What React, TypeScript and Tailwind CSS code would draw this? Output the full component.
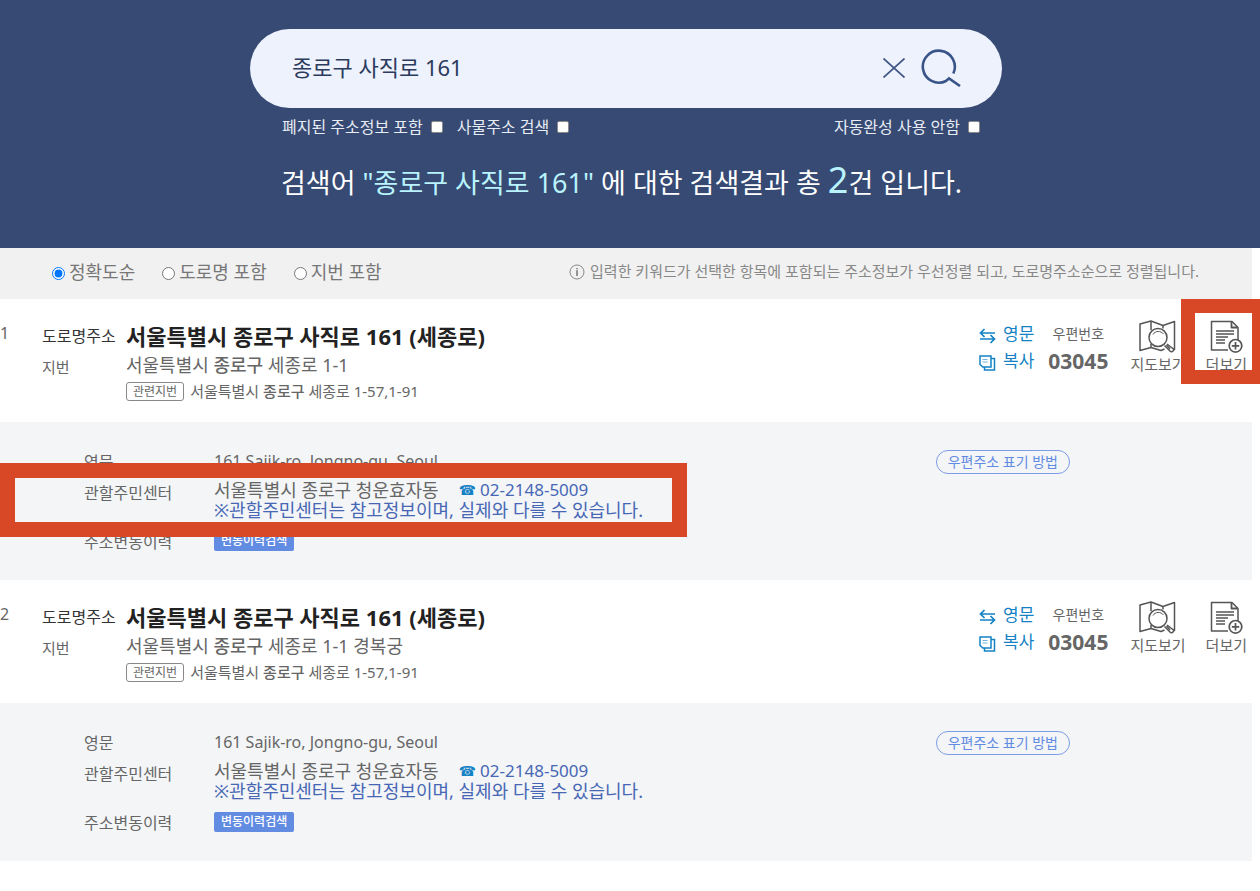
import { useState } from "react";

type Result = {
  no: number;
  jibun: string;
  highlight: boolean;
};

const results: Result[] = [
  { no: 1, jibun: "세종로 1-1", highlight: true },
  { no: 2, jibun: "세종로 1-1 경복궁", highlight: false },
];

const sortOptions = ["정확도순", "도로명 포함", "지번 포함"];

function CloseIcon() {
  return (
    <svg width="22" height="20" viewBox="0 0 22 20" fill="none" stroke="#3f5583" strokeWidth="1.7">
      <path d="M.5.5 21.500 19.500M21.500.5.5 19.500" />
    </svg>
  );
}

function SearchIcon() {
  return (
    <svg width="40" height="38" viewBox="0 0 40 38" fill="none" stroke="#3a5488" strokeWidth="2.600">
      <path d="M32.300 24.500A16 16 0 1 0 25 32L28 29.500L39 37" />
    </svg>
  );
}

function SwapIcon() {
  return (
    <svg className="mt-1" width="17" height="16" viewBox="0 0 17 16" fill="none" stroke="#1482c5" strokeWidth="1.700">
      <path d="M16 5H1.500M5.500 1 1.500 5 5.500 9" />
      <path d="M1 11H15.500M11.500 7 15.500 11 11.500 15" />
    </svg>
  );
}

function CopyIcon() {
  return (
    <svg className="mt-1" width="17" height="16" viewBox="0 0 17 16" fill="none" stroke="#1482c5" strokeWidth="1.500">
      <path d="M1 1H12V12H3.800L1 9.500Z" />
      <path d="M12 3.500H15.500V15H5.500V12" />
      <path d="M3.500 4.500H8.500M3.500 7H8.500" strokeWidth="1" opacity=".6" />
    </svg>
  );
}

function MapIcon() {
  return (
    <svg width="37" height="33" viewBox="0 0 37 33" fill="none" stroke="#555" strokeWidth="1.500" strokeLinejoin="round">
      <path d="M12 27.500 1 30.500V4L12 1 24 5.500 35.500 1.500V29.500L33 28.500" />
      <path d="M12 1V10M12 24V27.500L22 30.500 25.500 29M24 5.500V8.500" />
      <circle cx="19" cy="17.500" r="9" />
      <path d="M14 14.500C16 10.500 22 10.500 24.500 14" strokeWidth="1" />
      <path d="M25.500 25.500 31.500 31.500C33.500 32 35 31 34.500 29L28 24" fill="#fff" />
      <path d="M27.500 25 31 29" />
    </svg>
  );
}

function DocIcon() {
  return (
    <svg width="33" height="33" viewBox="0 0 33 33" fill="none" stroke="#555" strokeWidth="1.500" strokeLinejoin="round">
      <path d="M18 30H1.500V1.500H22L28 7.500V20" />
      <path d="M21.500 2V7.500H27.500" strokeWidth="1.800" />
      <path d="M6 11H24M6 14H24M6 17H18M6 20H15M6 23H15" strokeWidth="1.300" />
      <circle cx="25.500" cy="25.800" r="6.300" strokeWidth="1.700" fill="#fff" />
      <path d="M25.500 22V29.500M21.800 25.800H29.200" strokeWidth="1.700" />
    </svg>
  );
}

function InfoIcon() {
  return (
    <svg width="16" height="16" viewBox="0 0 16 16" fill="none" stroke="#888">
      <circle cx="8" cy="8" r="7" />
      <path d="M8 4V5.300M8 6.300V12" strokeWidth="1.800" />
    </svg>
  );
}

function CheckOption({ label }: { label: string }) {
  return (
    <label className="flex items-center gap-2 text-base leading-5 text-[#e8ecf5]">
      {label}
      <input type="checkbox" className="h-3 w-3 appearance-none rounded-[2px] border border-[#8a8a8a] bg-white checked:bg-[#0075ff]" />
    </label>
  );
}

function ResultRow({ result }: { result: Result }) {
  return (
    <li>
      <div className="relative flex h-[123px] pt-5 text-[#666]">
        <span className="w-[42px] text-base leading-7">{result.no}</span>
        <dl className="grid flex-1 grid-cols-[84px_1fr] content-start">
          <dt className="text-base leading-[34px] text-[#333]">도로명주소</dt>
          <dd className="text-[22px] leading-[34px] font-bold text-[#222]">서울특별시 종로구 사직로 161 (세종로)</dd>
          <dt className="pt-0.5 text-[15px] leading-6">지번</dt>
          <dd className="pt-0.5 text-lg leading-5">
            서울특별시 <span className="font-medium">종로구</span> {result.jibun}
          </dd>
          <dd className="col-start-2 flex items-center gap-[6px] text-[15px] leading-6">
            <span className="rounded-[3px] border border-[#888] px-[6px] text-xs leading-[17px]">관련지번</span>
            <span>
              서울특별시 <span className="font-medium">종로구</span> 세종로 1-57,1-91
            </span>
          </dd>
        </dl>
        <div className="flex items-start pr-[5px]">
          <div className="mr-[14px] flex flex-col pt-px text-[17px] text-[#1482c5]">
            <button type="button" className="flex items-center gap-[7px] leading-[27px]">
              <SwapIcon />
              영문
            </button>
            <button type="button" className="flex items-center gap-[7px] leading-[27px]">
              <CopyIcon />
              복사
            </button>
          </div>
          <div className="mr-[22px] text-center">
            <div className="text-sm leading-[30px]">우편번호</div>
            <div className="text-[21px] leading-6 font-bold">03045</div>
          </div>
          <button type="button" className="mr-5 flex flex-col items-center gap-px pt-px text-[15px] leading-5">
            <MapIcon />
            지도보기
          </button>
          <button type="button" className="flex flex-col items-center gap-px pt-px text-[15px] leading-5">
            <DocIcon />
            더보기
          </button>
        </div>
        {result.highlight && (
          <div className="pointer-events-none absolute top-0 -right-2 h-[85px] w-[79px] border-[14px] border-r-8 border-[#d94826]" />
        )}
      </div>
      <div className="relative flex h-[158px] items-start bg-[#f3f5f7] pt-7 pl-[84px] text-[#666]">
        <dl className="grid flex-1 grid-cols-[130px_1fr] content-start">
          <dt className="text-base leading-6">영문</dt>
          <dd className="text-base leading-[22px]">161 Sajik-ro, Jongno-gu, Seoul</dd>
          <dt className="pt-[3px] text-base leading-8">관할주민센터</dt>
          <dd className="pt-[6px] text-lg leading-5">
            <div className="flex">
              서울특별시 종로구 청운효자동
              <a href="tel:02-2148-5009" className="ml-5 flex gap-1 text-[17px] text-[#4767b5]">
                <span className="font-['DejaVu_Sans'] text-sm leading-5 text-[#1482c5]">☎</span>
                02-2148-5009
              </a>
            </div>
            <div className="text-[#4767b5]">※관할주민센터는 참고정보이며, 실제와 다를 수 있습니다.</div>
          </dd>
          <dt className="pt-[6px] text-base leading-8">주소변동이력</dt>
          <dd className="flex items-center pt-1">
            <button type="button" className="rounded-[2px] bg-[#628be2] px-[7px] text-xs leading-5 font-medium text-white">
              변동이력검색
            </button>
          </dd>
        </dl>
        <button
          type="button"
          className="mr-[182px] h-6 rounded-full border border-[#7c9ce6] px-[11px] text-sm leading-[22px] text-[#628be2]"
        >
          우편주소 표기 방법
        </button>
        {result.highlight && (
          <div className="pointer-events-none absolute top-[41px] left-0 h-[74px] w-[687px] border-[15px] border-[#d94826]" />
        )}
      </div>
    </li>
  );
}

export default function App() {
  const [query, setQuery] = useState("종로구 사직로 161");
  const [sort, setSort] = useState(0);

  return (
    <div className="overflow-x-hidden bg-white pb-7 font-['Noto_Sans','Noto_Sans_CJK_KR',sans-serif]">
      <header className="h-[248px] bg-[#364a73] pt-[29px] pr-2">
        <div className="mx-auto max-w-[752px]">
          <form
            role="search"
            onSubmit={(e) => e.preventDefault()}
            className="flex h-[79px] items-center rounded-full bg-[#edf2fd] pr-[41px] pb-[2px] pl-[42px]"
          >
            <input
              aria-label="주소 검색"
              value={query}
              onChange={(e) => setQuery(e.target.value)}
              className="min-w-0 flex-1 bg-transparent text-[22px] text-[#2c3a5c] outline-none"
            />
            <button type="button" aria-label="지우기" onClick={() => setQuery("")} className="mr-4">
              <CloseIcon />
            </button>
            <button type="submit" aria-label="검색">
              <SearchIcon />
            </button>
          </form>
          <div className="mt-[9px] flex gap-[14px] pr-[22px] pl-8">
            <CheckOption label="폐지된 주소정보 포함" />
            <CheckOption label="사물주소 검색" />
            <div className="ml-auto">
              <CheckOption label="자동완성 사용 안함" />
            </div>
          </div>
          <h1 className="mt-[23px] pl-[31px] text-[27px] leading-10 whitespace-nowrap text-white">
            검색어 <span className="text-[#b9f3fd]">"종로구 사직로 161"</span> 에 대한 검색결과 총{" "}
            <span className="text-4xl leading-10 text-[#b9f3fd]">2</span>건 입니다.
          </h1>
        </div>
      </header>
      <main className="pr-2">
        <div className="flex h-[51px] items-center bg-[#f1f1f1] pr-[53px] pb-1 pl-[52px] text-[#777]">
          {sortOptions.map((label, i) => (
            <label key={label} className="mr-[27px] flex items-center gap-1 text-lg">
              <input
                type="radio"
                name="sort"
                checked={sort === i}
                onChange={() => setSort(i)}
                className="mt-1 h-[13px] w-[13px]"
              />
              {label}
            </label>
          ))}
          <p className="ml-auto flex items-center gap-[5px] text-[15px] text-[#888]">
            <InfoIcon />
            입력한 키워드가 선택한 항목에 포함되는 주소정보가 우선정렬 되고, 도로명주소순으로 정렬됩니다.
          </p>
        </div>
        <ol>
          {results.map((r) => (
            <ResultRow key={r.no} result={r} />
          ))}
        </ol>
      </main>
    </div>
  );
}
